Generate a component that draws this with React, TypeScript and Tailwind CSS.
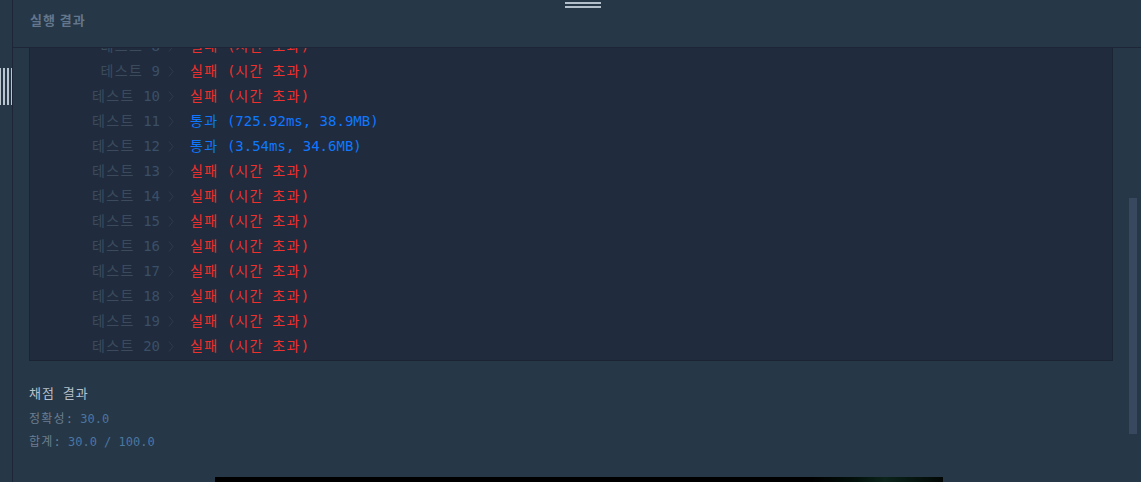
import React from "react";

type Row = { n: number; pass: boolean; detail: string };

const rows: Row[] = [
  { n: 8, pass: false, detail: "시간 초과" },
  { n: 9, pass: false, detail: "시간 초과" },
  { n: 10, pass: false, detail: "시간 초과" },
  { n: 11, pass: true, detail: "725.92ms, 38.9MB" },
  { n: 12, pass: true, detail: "3.54ms, 34.6MB" },
  { n: 13, pass: false, detail: "시간 초과" },
  { n: 14, pass: false, detail: "시간 초과" },
  { n: 15, pass: false, detail: "시간 초과" },
  { n: 16, pass: false, detail: "시간 초과" },
  { n: 17, pass: false, detail: "시간 초과" },
  { n: 18, pass: false, detail: "시간 초과" },
  { n: 19, pass: false, detail: "시간 초과" },
  { n: 20, pass: false, detail: "시간 초과" },
];

const mono = "font-['DejaVu_Sans_Mono','Noto_Sans_CJK_KR',monospace]";

function K({ children, t = "tracking-[1.35px]" }: { children: React.ReactNode; t?: string }) {
  return <span className={t}>{children}</span>;
}

export default function App() {
  return (
    <div className="relative flex h-[482px] w-[1141px] overflow-hidden bg-[#263747]">
      {/* left strip */}
      <div className="relative h-full w-[13px] shrink-0 border-r border-[#1c2636] bg-[#263747]">
        <div className="absolute left-0 top-[68px] flex h-[37px] gap-[2px]">
          <div className="h-full w-[1px] bg-[#b9c5cf]" />
          <div className="h-full w-[2px] bg-[#b9c5cf]" />
          <div className="h-full w-[2px] bg-[#b9c5cf]" />
          <div className="h-full w-[1px] bg-[#b9c5cf]" />
        </div>
      </div>

      {/* main */}
      <div className="flex h-full flex-1 flex-col">
        <div className="flex h-[48px] shrink-0 items-center border-b border-[#1c2636] pb-[8px] pl-[17px]">
          <span className="font-['Noto_Sans_CJK_KR',sans-serif] text-[13px] font-bold tracking-[1px] text-[#63768b]">
            실행 결과
          </span>
        </div>

        <div className="flex min-h-0 flex-1">
          <div className="flex-1 px-[16px]">
            <div className="overflow-hidden border-x border-b border-[#1a2433] bg-[#202b3d]">
              <div className={`mt-[-14px] pb-[1px] ${mono} text-[14px]`}>
                {rows.map((r) => (
                  <div key={r.n} className="flex h-[25px] items-center">
                    <div className="w-[130px] whitespace-pre text-right">
                      <span className="text-[#3b4b5d]">
                        <K>테스트</K>{" "}
                      </span>
                      <span className="text-[#3b4f67]">{r.n}</span>
                    </div>
                    <svg
                      className="ml-[8px] shrink-0"
                      width="6"
                      height="11"
                      viewBox="0 0 6 11"
                    >
                      <polyline
                        points="1,0.5 5,5.5 1,10.5"
                        fill="none"
                        stroke="#2e3c4e"
                        strokeWidth="1"
                      />
                    </svg>
                    <div
                      className={`ml-[16px] whitespace-pre ${
                        r.pass ? "text-[#0f78ff]" : "text-[#f0302c]"
                      }`}
                    >
                      <K>{r.pass ? "통과" : "실패"}</K> (
                      {r.pass ? (
                        r.detail
                      ) : (
                        <>
                          <K>시간</K> <K>초과</K>
                        </>
                      )}
                      )
                    </div>
                  </div>
                ))}
              </div>
            </div>

            <div className={`${mono} pt-[23px]`}>
              <div className="text-[13px] leading-[20px] text-[#b7c1cb]">
                <K t="tracking-[1px]">채점</K> <K t="tracking-[1px]">결과</K>
              </div>
              <div className="mt-[6px] text-[12px] leading-[18px]">
                <span className="text-[#6b7e91]">
                  <K t="tracking-[1.2px]">정확성</K>:{" "}
                </span>
                <span className="text-[#4b76a0]">30.0</span>
              </div>
              <div className="mt-[5px] text-[12px] leading-[18px]">
                <span className="text-[#6b7e91]">
                  <K t="tracking-[1.2px]">합계</K>:{" "}
                </span>
                <span className="text-[#4b76a0]">30.0 / 100.0</span>
              </div>
            </div>

            <div className="ml-[186px] mt-[26px] h-[40px] w-[728px] bg-[linear-gradient(90deg,#000_0%,#000_82%,#03100c_88%,#0b241c_92%,#020705_100%)]" />
          </div>

          <div className="relative w-[12px] shrink-0">
            <div className="absolute left-0 top-[150px] h-[236px] w-[8px] bg-[#37485f]" />
          </div>
        </div>
      </div>

      {/* top drag handle */}
      <div className="absolute left-[565px] top-[2px] flex w-[36px] flex-col gap-[2px]">
        <div className="h-[2px] w-full bg-[#b3bfcb]" />
        <div className="h-[2px] w-full bg-[#b3bfcb]" />
      </div>
    </div>
  );
}
